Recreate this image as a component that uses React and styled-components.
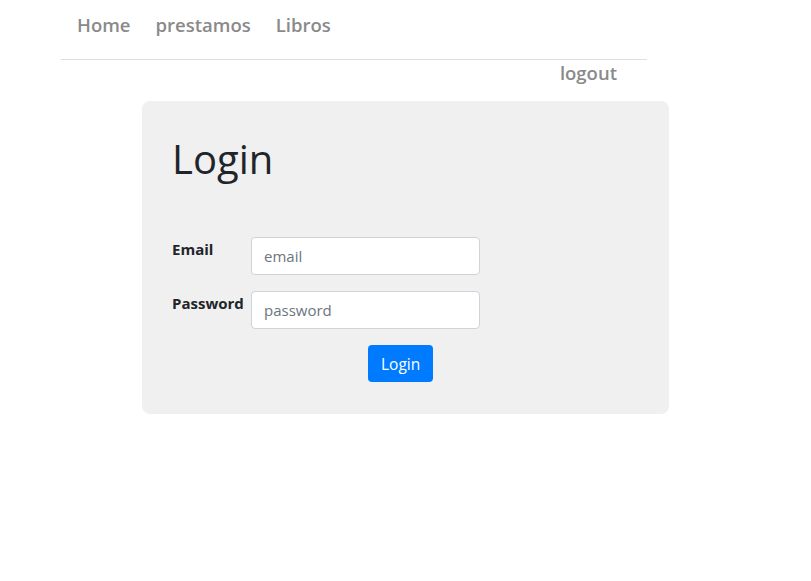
import React from "react";
import styled, { createGlobalStyle } from "styled-components";

const GlobalStyle = createGlobalStyle`
  body {
    margin: 0;
    background: #fff;
    font-family: "Open Sans", "Liberation Sans", sans-serif;
    color: #212529;
  }
`;

const Page = styled.div`
  width: 811px;
  min-height: 581px;
`;

const Nav = styled.nav`
  margin-left: 61px;
  width: 586px;
  border-bottom: 1px solid #dfdfdf;
  display: flex;
  align-items: center;
  gap: 25px;
  padding: 0 16px 11px;
  height: 60px;
  box-sizing: border-box;
`;

const NavLink = styled.a`
  font-size: 18.5px;
  font-weight: 600;
  color: #8a8a8a;
  text-decoration: none;
  cursor: pointer;
`;

const LogoutRow = styled.div`
  width: 617px;
  display: flex;
  justify-content: flex-end;
  height: 41px;
  box-sizing: border-box;
`;

const Card = styled.div`
  margin-left: 142px;
  width: 527px;
  box-sizing: border-box;
  background: #f0f0f0;
  border-radius: 8px;
  padding: 34px 30px 32px;
`;

const Title = styled.h1`
  margin: 0 0 54px;
  font-size: 40px;
  font-weight: 500;
  line-height: 1.2;
`;

const Row = styled.div`
  display: flex;
  align-items: flex-start;
  margin-bottom: 16px;
`;

const Label = styled.label`
  width: 79px;
  font-size: 15px;
  font-weight: 700;
  padding-top: 2px;
`;

const Input = styled.input`
  width: 229px;
  height: 38px;
  box-sizing: border-box;
  border: 1px solid #ced4da;
  border-radius: 4px;
  padding: 6px 12px;
  font-family: inherit;
  font-size: 15px;
  color: #495057;
  background: #fff;
  &::placeholder {
    color: #6c757d;
  }
`;

const Button = styled.button`
  margin-left: 196px;
  height: 37px;
  padding: 0 13px;
  border: none;
  border-radius: 4px;
  background: #007bff;
  color: #fff;
  font-family: inherit;
  font-size: 15.5px;
  cursor: pointer;
`;

export default function App() {
  return (
    <Page>
      <GlobalStyle />
      <Nav>
        <NavLink>Home</NavLink>
        <NavLink>prestamos</NavLink>
        <NavLink>Libros</NavLink>
      </Nav>
      <LogoutRow>
        <NavLink>logout</NavLink>
      </LogoutRow>
      <Card>
        <Title>Login</Title>
        <Row>
          <Label>Email</Label>
          <Input placeholder="email" />
        </Row>
        <Row>
          <Label>Password</Label>
          <Input type="password" placeholder="password" />
        </Row>
        <Button>Login</Button>
      </Card>
    </Page>
  );
}
